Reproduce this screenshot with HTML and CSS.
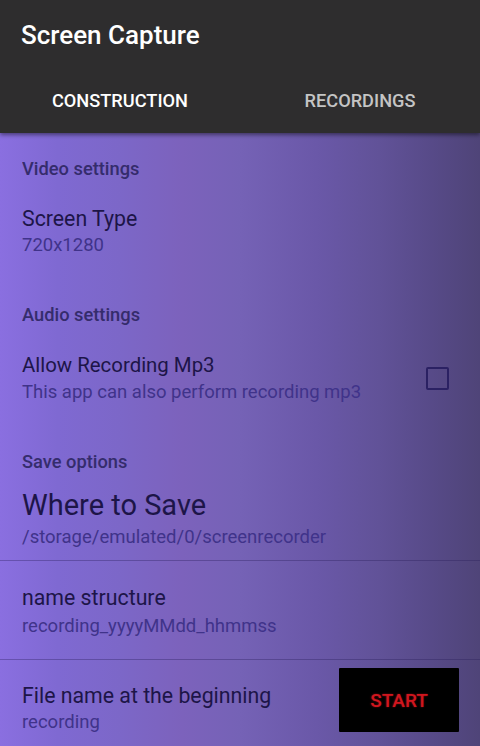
FILE: index.html
```html
<!DOCTYPE html>
<html>
<head>
<meta charset="utf-8">
<link rel="stylesheet" href="styles.css">
</head>
<body>
<div class="app">
  <header class="header">
    <div class="toolbar">Screen Capture</div>
    <nav class="tabs">
      <div class="tab tab-active">CONSTRUCTION</div>
      <div class="tab">RECORDINGS</div>
    </nav>
  </header>
  <main class="content">
    <div class="category cat-video">Video settings</div>
    <div class="item item-screen">
      <div class="item-title">Screen Type</div>
      <div class="item-sub">720x1280</div>
    </div>
    <div class="category cat-audio">Audio settings</div>
    <div class="item item-row item-audio">
      <div class="item-text">
        <div class="item-title title-allow">Allow Recording Mp3</div>
        <div class="item-sub sub-audio">This app can also perform recording mp3</div>
      </div>
      <div class="checkbox"></div>
    </div>
    <div class="category cat-save">Save options</div>
    <div class="item item-where">
      <div class="item-title title-big">Where to Save</div>
      <div class="item-sub sub-where">/storage/emulated/0/screenrecorder</div>
    </div>
    <div class="divider"></div>
    <div class="item item-name">
      <div class="item-title">name structure</div>
      <div class="item-sub sub-name">recording_yyyyMMdd_hhmmss</div>
    </div>
    <div class="divider"></div>
    <div class="item item-row item-file">
      <div class="item-text">
        <div class="item-title">File name at the beginning</div>
        <div class="item-sub">recording</div>
      </div>
      <button class="start">START</button>
    </div>
  </main>
</div>
</body>
</html>
```

FILE: styles.css
```css
* { box-sizing: border-box; }
html, body { margin: 0; padding: 0; }
body {
  width: 480px;
  height: 746px;
  overflow: hidden;
  font-family: Roboto, "Liberation Sans", sans-serif;
  background: #2e2d2e;
}
.app {
  width: 480px;
  height: 746px;
  display: flex;
  flex-direction: column;
}
.header {
  background: #2e2d2e;
  color: #ffffff;
  height: 133px;
  flex: none;
  position: relative;
  z-index: 1;
  box-shadow: 0 2px 4px rgba(0,0,0,0.45);
}
.toolbar {
  height: 70px;
  padding: 0 21px;
  display: flex;
  align-items: center;
  font-size: 26px;
  font-weight: 500;
}
.tabs {
  height: 63px;
  display: flex;
}
.tab {
  flex: 1;
  display: flex;
  align-items: center;
  justify-content: center;
  font-size: 18.2px;
  font-weight: 500;
  color: #c4c4c4;
  padding-bottom: 3px;
}
.tab-active { color: #ffffff; }
.content {
  flex: 1;
  background: linear-gradient(to right, #8a6fe0 0%, #7f69d2 12%, #7c67c8 25%, #7c62bc 38%, #7562b6 50%, #6a58a8 66%, #615298 79%, #574a88 90%, #4f4478 100%);
  overflow: hidden;
}
.category {
  padding: 0 22px;
  line-height: 20px;
  font-size: 18.3px;
  font-weight: 500;
  color: #2f2764;
  opacity: 0.92;
}
.cat-video { margin-top: 26px; }
.cat-audio { margin-top: 50px; }
.cat-save { margin-top: 50px; }
.item { padding: 0 22px; }
.item-row {
  display: flex;
  align-items: center;
  justify-content: space-between;
}
.item-title {
  font-size: 21.3px;
  line-height: 24px;
  color: #1d1548;
}
.title-allow { font-size: 20.4px; }
.title-big {
  font-size: 29px;
  line-height: 30px;
}
.item-sub {
  font-size: 18.5px;
  line-height: 20px;
  color: #40338a;
  margin-top: 4px;
}
.item-screen { margin-top: 28px; }
.item-audio { margin-top: 28px; }
.sub-audio { margin-top: 5px; }
.item-where { margin-top: 18px; }
.sub-where { margin-top: 7px; }
.divider {
  height: 1px;
  margin-top: 13px;
  background: rgba(40, 30, 90, 0.35);
}
.item-name { margin-top: 25px; }
.sub-name { margin-top: 6px; }
.item-name + .divider { margin-top: 23px; }
.item-file { margin-top: 8px; padding-right: 21px; }
.item-file .item-text { padding-top: 16px; }
.checkbox {
  width: 23px;
  height: 23px;
  border: 2.5px solid #2b2163;
  border-radius: 2px;
  margin-right: 9px;
  margin-top: 2px;
}
.start {
  width: 120px;
  height: 64px;
  background: #000000;
  border: none;
  border-radius: 1px;
  color: #d0161e;
  font-family: Roboto, "Liberation Sans", sans-serif;
  font-size: 19px;
  font-weight: 500;
  padding: 0;
  text-shadow: 0 0 2px rgba(208, 22, 30, 0.6);
}
```
